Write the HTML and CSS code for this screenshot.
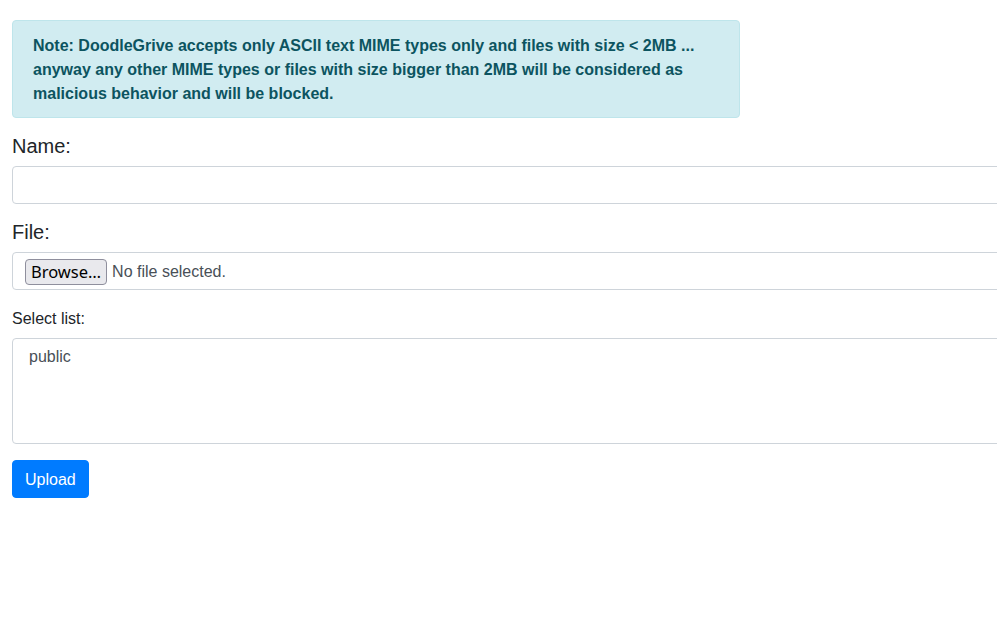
FILE: index.html
```html
<!DOCTYPE html>
<html>
<head>
<meta charset="utf-8">
<link rel="stylesheet" href="styles.css">
</head>
<body>
<div class="page">
  <div class="alert">Note: DoodleGrive accepts only ASCII text MIME types only and files with size &lt; 2MB ... anyway any other MIME types or files with size bigger than 2MB will be considered as malicious behavior and will be blocked.</div>
  <form class="form">
    <div class="group">
      <label class="big-label" for="name">Name:</label>
      <input class="control" id="name" type="text">
    </div>
    <div class="group">
      <label class="big-label">File:</label>
      <div class="control file">
        <span class="browse">Browse…</span>
        <span class="nofile">No file selected.</span>
      </div>
    </div>
    <div class="group">
      <label class="small-label" for="list">Select list:</label>
      <div class="control select" id="list">
        <div class="option">public</div>
      </div>
    </div>
    <button type="button" class="btn">Upload</button>
  </form>
</div>
</body>
</html>
```
FILE: styles.css
```css
html, body {
  margin: 0;
  padding: 0;
  overflow: hidden;
  background: #fff;
}
body {
  font-family: "Liberation Sans", Arial, sans-serif;
  font-size: 16px;
  line-height: 1.5;
  color: #212529;
}
.page {
  padding: 20px 0 0 12px;
  width: 1100px;
}
.alert {
  box-sizing: border-box;
  width: 728px;
  padding: 13px 20px 11px;
  margin-bottom: 16px;
  background: #d1ecf1;
  border: 1px solid #bee5eb;
  border-radius: 4px;
  color: #0c5460;
  font-weight: bold;
  line-height: 24px;
}
.group {
  margin-bottom: 16px;
}
.big-label {
  display: block;
  font-size: 20px;
  line-height: 24px;
  margin-bottom: 8px;
}
.small-label {
  display: block;
  font-size: 16px;
  line-height: 23px;
  padding-top: 1px;
  margin-bottom: 8px;
}
.control {
  box-sizing: border-box;
  display: block;
  width: 100%;
  height: 38px;
  padding: 6px 12px;
  font-family: "Liberation Sans", Arial, sans-serif;
  font-size: 16px;
  line-height: 24px;
  color: #495057;
  background: #fff;
  border: 1px solid #ced4da;
  border-radius: 4px;
  margin: 0;
}
.file {
  display: flex;
  align-items: center;
  gap: 5px;
  padding-top: 7px;
  padding-bottom: 5px;
}
.browse {
  box-sizing: border-box;
  height: 26px;
  padding: 0 5px;
  font-family: "Noto Sans", sans-serif;
  font-size: 16.5px;
  line-height: 24px;
  color: #000;
  background: #e9e9ed;
  border: 1px solid #8f8f9d;
  border-radius: 4px;
}
.nofile {
  color: #495057;
}
.select {
  height: 106px;
  padding: 7px 16px 5px;
}
.option {
  line-height: 22px;
}
.btn {
  font-family: "Liberation Sans", Arial, sans-serif;
  font-size: 16px;
  line-height: 24px;
  padding: 7px 12px 5px;
  color: #fff;
  background: #007bff;
  border: 1px solid #007bff;
  border-radius: 4px;
  margin: 0;
}
```
